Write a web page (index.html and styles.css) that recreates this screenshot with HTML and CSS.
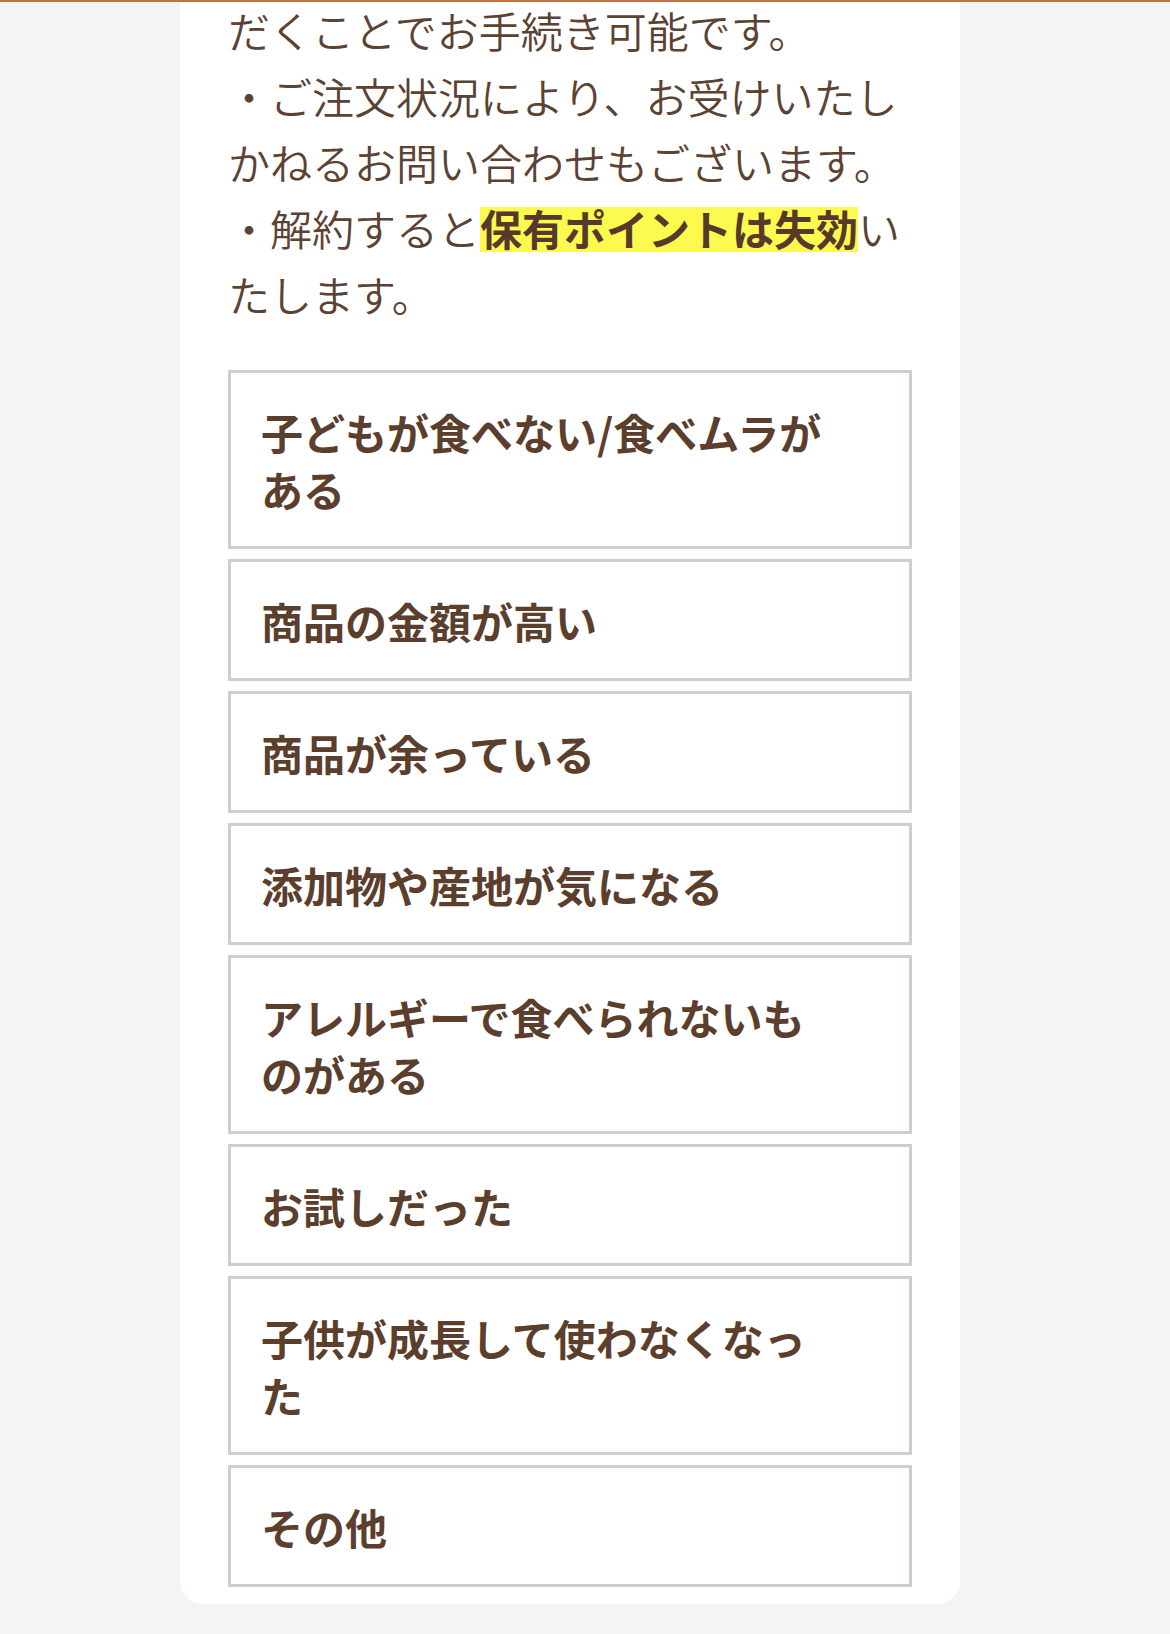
FILE: index.html
```html
<!DOCTYPE html>
<html lang="ja">
<head>
    <meta charset="UTF-8">
    <meta name="viewport" content="width=device-width, initial-scale=1.0">
    <title>解約理由の選択</title>
    <link rel="stylesheet" href="styles.css">
</head>
<body>
    <div class="top-bar"></div>

    <div class="page">
        <div class="card">
            <p class="notice">
                だくことでお手続き可能です。<br>
                ・ご注文状況により、お受けいたしかねるお問い合わせもございます。<br>
                ・解約すると<span class="mark">保有ポイントは失効</span>いたします。
            </p>

            <ul class="reason-list">
                <li class="reason">子どもが食べない/食べムラがある</li>
                <li class="reason">商品の金額が高い</li>
                <li class="reason">商品が余っている</li>
                <li class="reason">添加物や産地が気になる</li>
                <li class="reason">アレルギーで食べられないものがある</li>
                <li class="reason">お試しだった</li>
                <li class="reason">子供が成長して使わなくなった</li>
                <li class="reason">その他</li>
            </ul>
        </div>
    </div>
</body>
</html>
```

FILE: styles.css
```css
* {
    margin: 0;
    padding: 0;
    box-sizing: border-box;
}

body {
    font-family: 'Noto Sans CJK JP', 'Noto Sans', sans-serif;
    background: #f3f4f6;
    color: #5b3e2c;
}

.top-bar {
    height: 2px;
    background: #c8733f;
}

.page {
    padding: 0 210px 30px 180px;
}

.card {
    display: flow-root;
    background: white;
    border-radius: 0 0 22px 22px;
    padding: 0 48px 17px;
}

.notice {
    margin-top: -5px;
    font-size: 42px;
    font-weight: 350;
    line-height: 66px;
    color: #5c4232;
}

.mark {
    font-weight: 700;
    color: #56392a;
    background: linear-gradient(transparent 17%, #fcf94f 17%, #fcf94f 90%, transparent 90%);
}

.reason-list {
    list-style: none;
    margin-top: 43px;
    display: flex;
    flex-direction: column;
    gap: 10px;
}

.reason {
    border: 3px solid #cbced3;
    padding: 29.5px 72px 29.5px 30px;
    font-size: 42px;
    font-weight: 700;
    line-height: 57px;
    color: #5b3e2c;
    cursor: pointer;
}
```
